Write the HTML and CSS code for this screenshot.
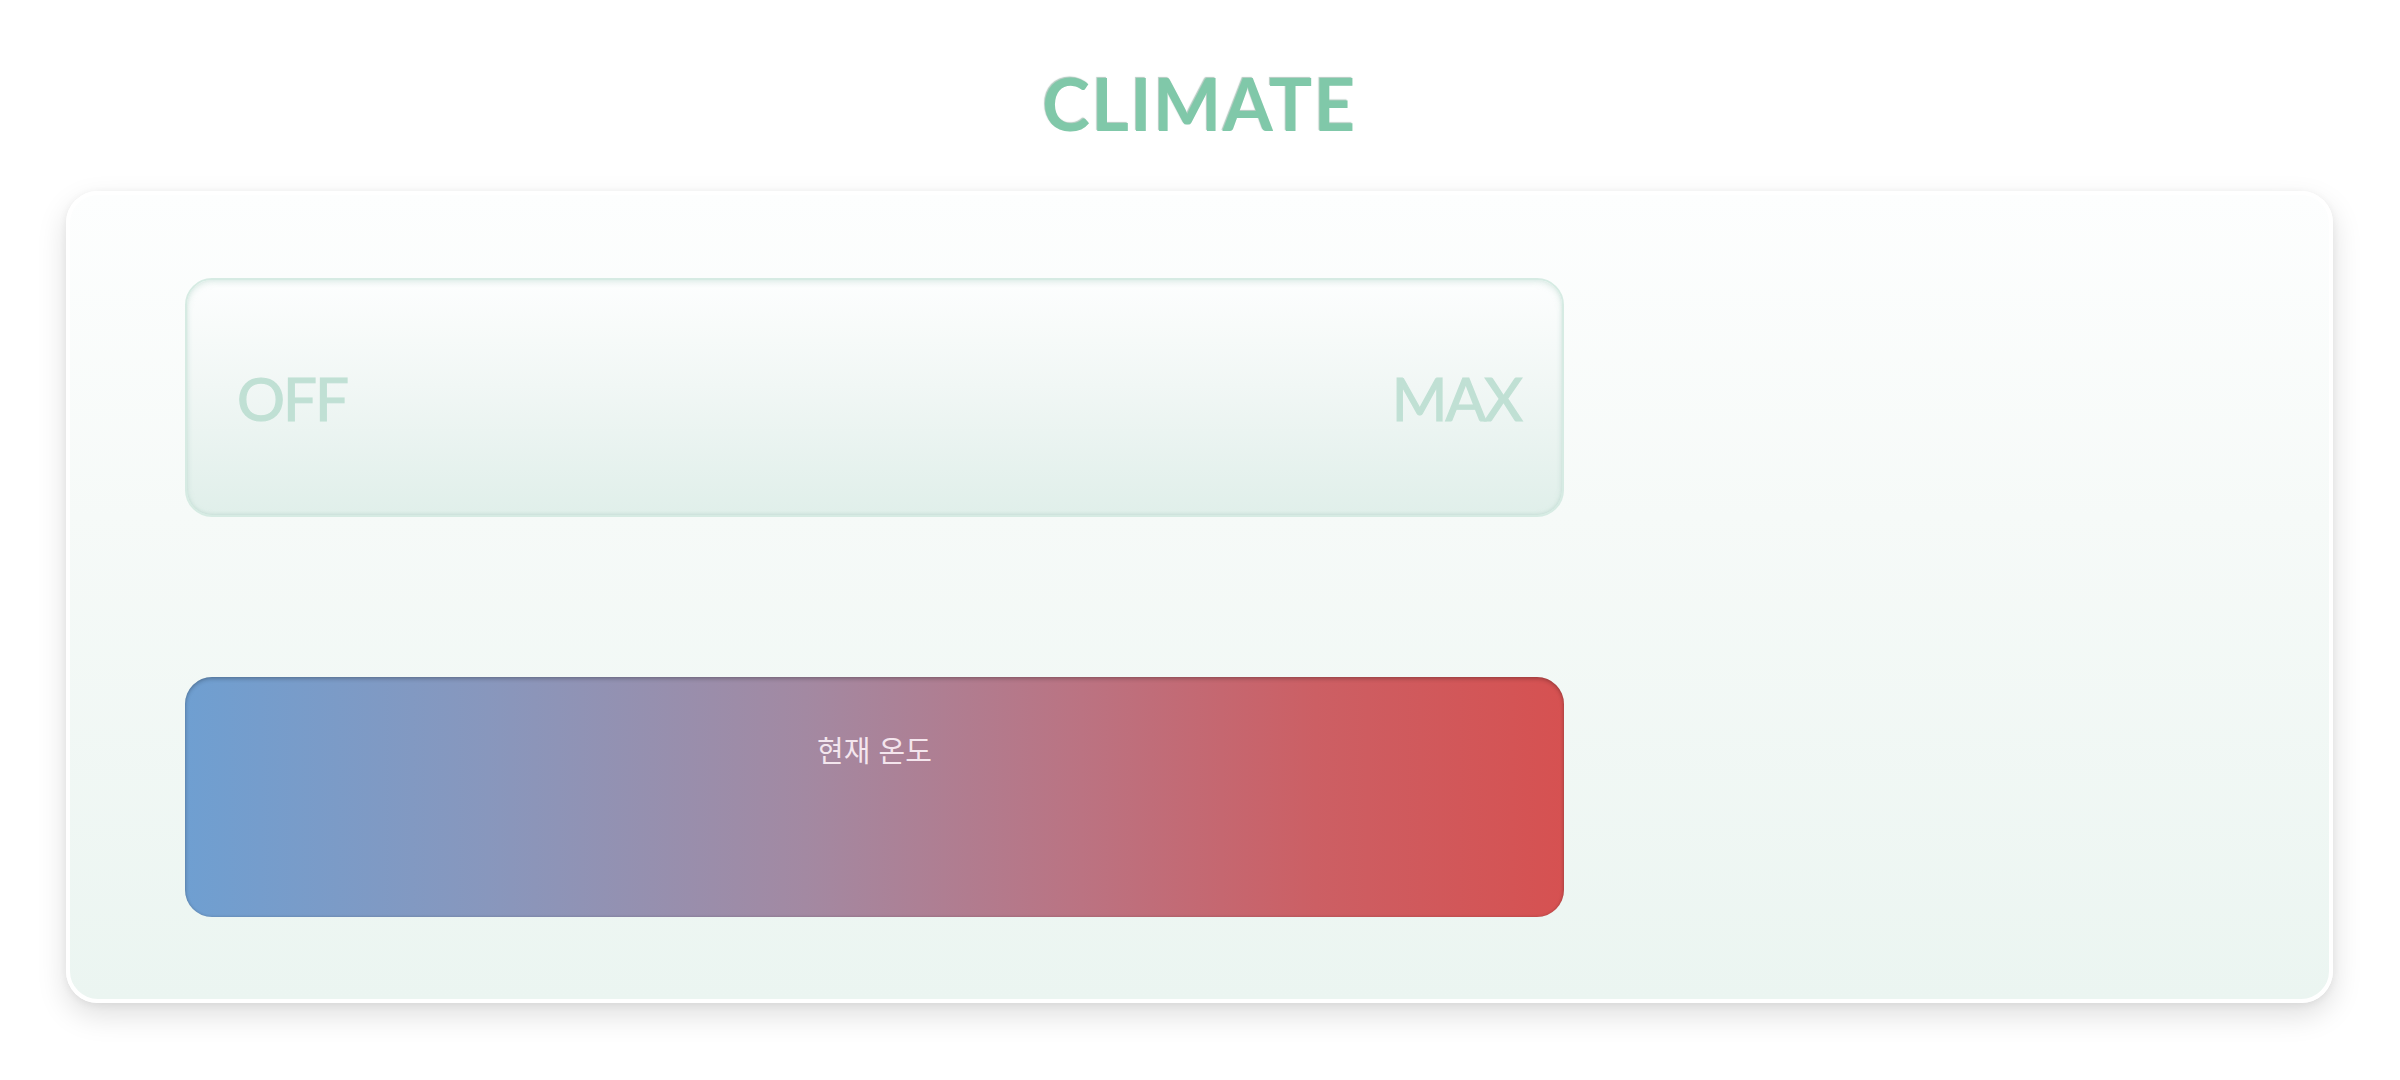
FILE: index.html
```html
<!DOCTYPE html>
<html lang="ko">
<head>
<meta charset="utf-8">
<title>Climate</title>
<link rel="stylesheet" href="styles.css">
</head>
<body>
  <h1 class="title">CLIMATE</h1>
  <div class="card">
    <div class="slider">
      <span class="slider-label">OFF</span>
      <span class="slider-label">MAX</span>
    </div>
    <div class="temp">
      <span class="temp-label">현재 온도</span>
    </div>
  </div>
</body>
</html>
```
FILE: styles.css
```css
html, body {
  margin: 0;
  padding: 0;
  background: #ffffff;
}

body {
  box-sizing: border-box;
  min-height: 1080px;
  padding: 0 67px 77px 66px;
  font-family: "Lato", "Noto Sans", sans-serif;
}

.title {
  margin: 0;
  height: 191px;
  display: flex;
  align-items: center;
  justify-content: center;
  box-sizing: border-box;
  font-family: "Lato", sans-serif;
  font-weight: 700;
  font-size: 72px;
  letter-spacing: 1.5px;
  color: #80c8a9;
  text-shadow: -1px -1px 1px rgba(60, 120, 95, 0.4), 1px 1px 1px rgba(255, 255, 255, 0.8);
  padding-top: 14px;
  line-height: 1;
}

.card {
  box-sizing: border-box;
  height: 812px;
  border: 4px solid #ffffff;
  border-radius: 32px;
  background: linear-gradient(180deg, #fdfefe 0%, #f6faf8 40%, #ebf5f1 100%);
  box-shadow: 0 12px 30px rgba(0, 0, 0, 0.13), 0 2px 8px rgba(0, 0, 0, 0.06);
  padding: 83px 115px 82px;
  display: flex;
  flex-direction: column;
  gap: 160px;
}

.slider {
  box-sizing: border-box;
  width: 1379px;
  height: 239px;
  border: 2px solid #d6ebe3;
  border-radius: 27px;
  background: linear-gradient(180deg, #fdfefe 0%, #f1f7f5 45%, #e0efea 100%);
  box-shadow: inset 0 2px 6px rgba(160, 200, 185, 0.35), inset 0 -1px 3px rgba(160, 200, 185, 0.3);
  display: flex;
  align-items: center;
  justify-content: space-between;
  padding: 0 41px 0 50px;
}

.slider-label {
  font-family: "Lato", sans-serif;
  font-weight: 400;
  font-size: 60px;
  letter-spacing: -2px;
  -webkit-text-stroke: 1.2px #c0e0d4;
  color: #c0e0d4;
  line-height: 1;
}

.temp {
  box-sizing: border-box;
  width: 1379px;
  height: 240px;
  border-radius: 27px;
  background: linear-gradient(90deg, #6f9fd1 0%, #8897bd 22%, #a389a2 45%, #bb7382 65%, #cc5f64 82%, #d65151 100%);
  box-shadow: inset 0 2px 4px rgba(0, 0, 0, 0.22), inset 0 0 3px rgba(0, 0, 0, 0.12);
  display: flex;
  justify-content: center;
  align-items: flex-start;
  padding-top: 56px;
}

.temp-label {
  font-family: "Noto Sans CJK KR", "Noto Sans", sans-serif;
  font-size: 29px;
  line-height: 32px;
  color: rgba(255, 244, 250, 0.88);
}
```
